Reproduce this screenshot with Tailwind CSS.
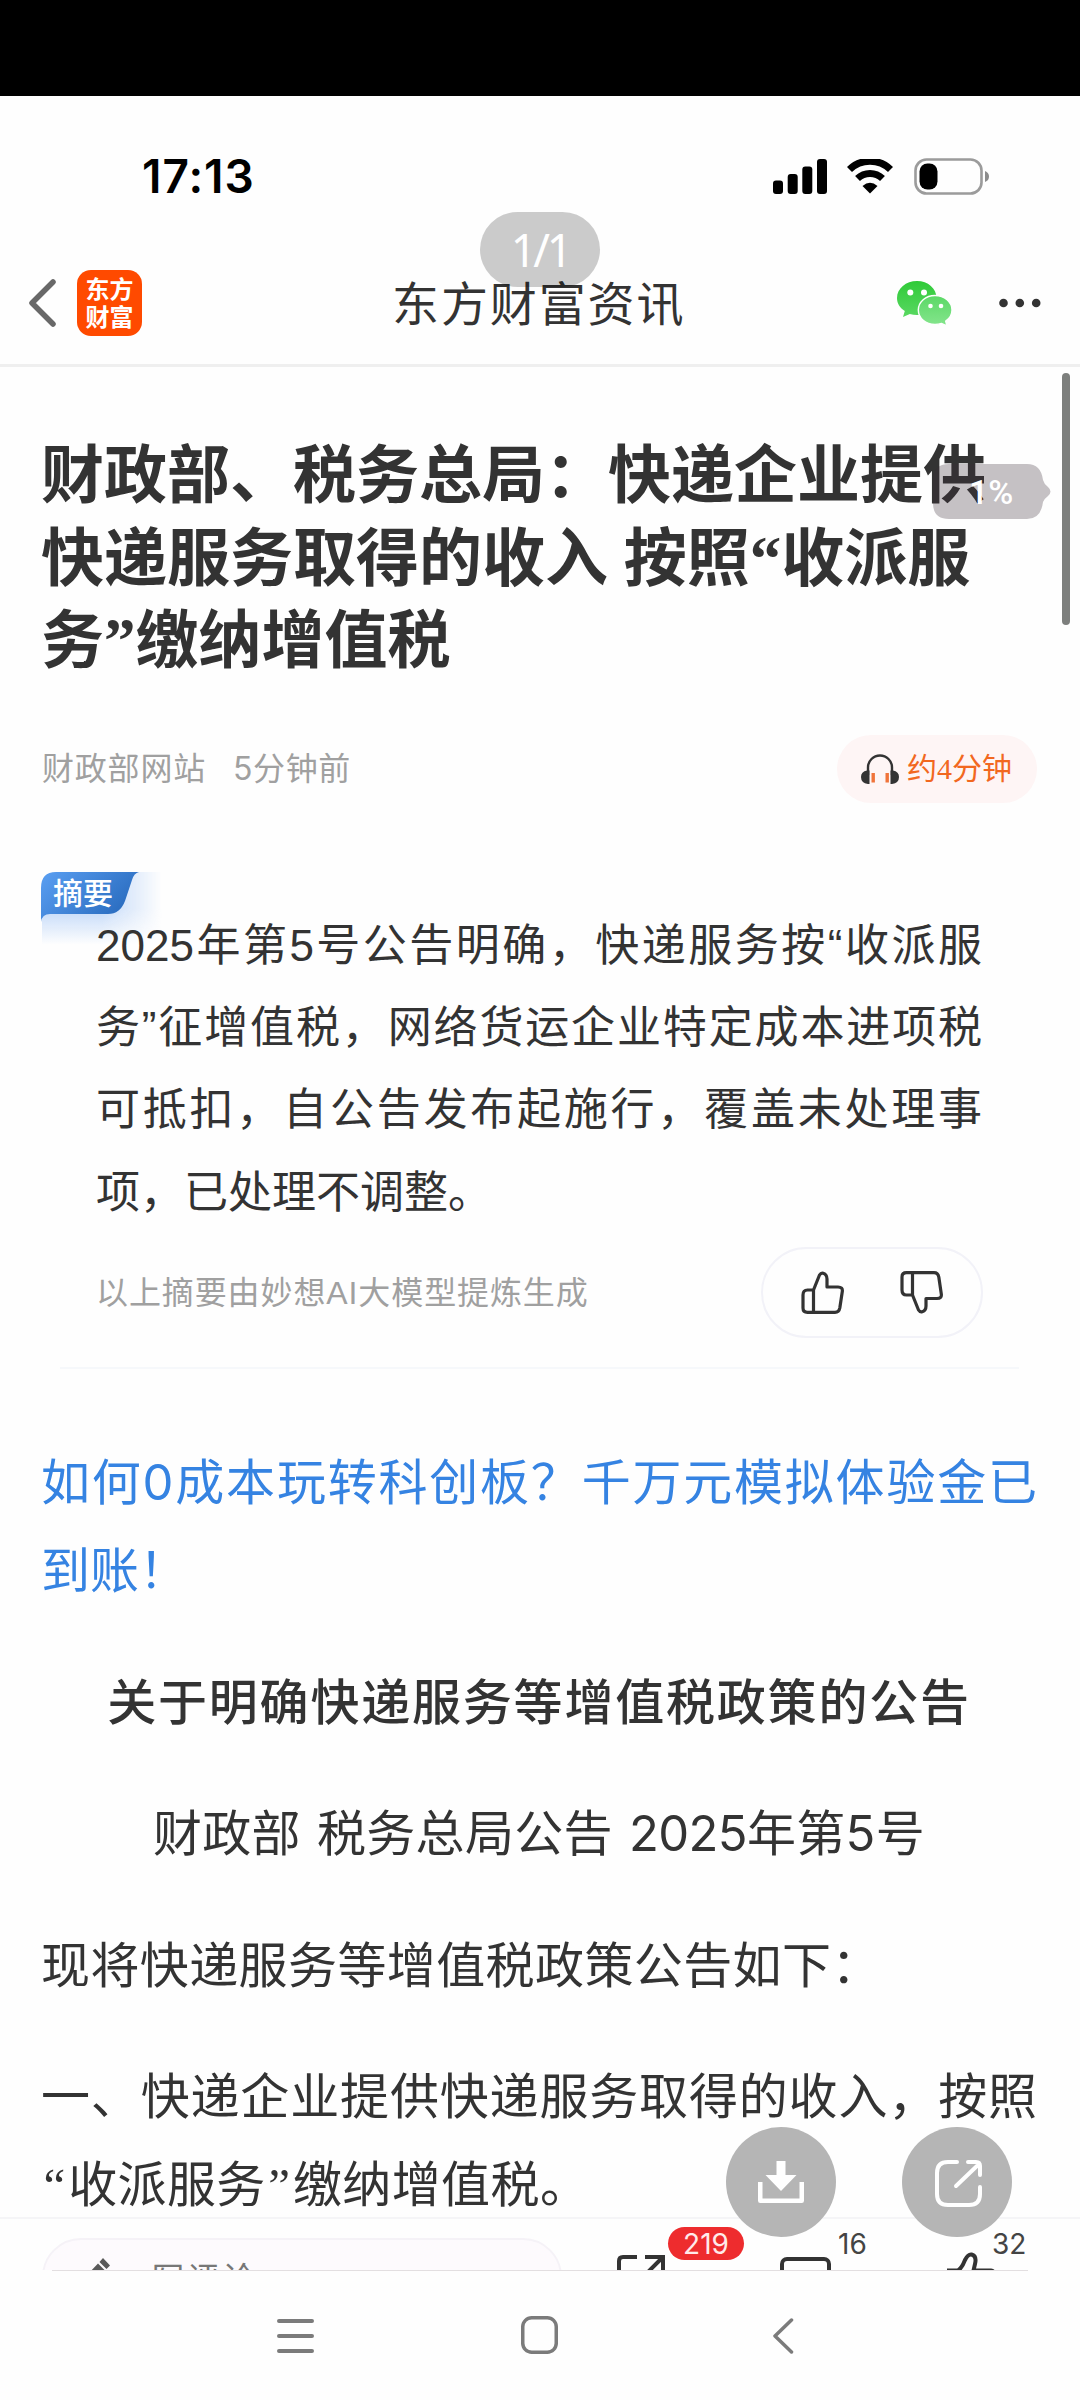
<!DOCTYPE html>
<html lang="zh-CN">

<head>
  <meta charset="UTF-8">
  <meta name="viewport" content="width=device-width, initial-scale=1.0">
  <title>东方财富资讯</title>
  <script src="https://cdn.jsdelivr.net/npm/@tailwindcss/browser@4"></script>
</head>

<body class="bg-[#fefefe]">
  <div class="relative flex flex-col w-[1080px] h-[2400px] overflow-hidden bg-[#fefefe] text-[#333] font-['Inter','Noto_Sans_CJK_SC',sans-serif]">

    <div class="h-24 shrink-0 bg-black"></div>

    <!-- Status bar -->
    <div class="flex items-center justify-between h-[160px] shrink-0 pl-[142px] pr-[90px]">
      <span class="text-[46px] font-semibold text-black tracking-[1px]">17:13</span>
      <div class="flex items-center">
        <svg class="w-[54px] h-[35px]" viewBox="0 0 54 35" fill="#000">
          <rect x="0" y="21.5" width="10" height="13.5" rx="3" />
          <rect x="14.7" y="15" width="10" height="20" rx="3" />
          <rect x="29.3" y="7.5" width="10" height="27.5" rx="3" />
          <rect x="44" y="0" width="10" height="35" rx="3" />
        </svg>
        <svg class="w-[46px] h-[35px] ml-[20px]" viewBox="0 0 46 35">
          <path d="M2.5 10.5 A29.5 29.5 0 0 1 43.5 10.5" fill="none" stroke="#000" stroke-width="7.2" />
          <path d="M10.5 19.5 A18 18 0 0 1 35.5 19.5" fill="none" stroke="#000" stroke-width="7" />
          <path d="M23 34.5 L15.5 27 Q23 20.5 30.5 27 Z" fill="#000" />
        </svg>
        <svg class="w-[76px] h-[37px] ml-[21px]" viewBox="0 0 76 37">
          <rect x="1.5" y="1.5" width="66" height="34" rx="11" fill="none" stroke="#9b9b9b" stroke-width="2.6" />
          <rect x="5.5" y="5.5" width="18" height="26" rx="8" fill="#000" />
          <path d="M71 13 Q75 14.500 75 18.500 Q75 22.500 71 24 Z" fill="#8c8c8c" />
        </svg>
      </div>
    </div>

    <!-- Title bar -->
    <header class="relative flex items-center justify-between h-[111px] shrink-0 pl-[29px] pr-[39px] pt-[2px] pb-[16px] border-b-[3px] border-[#efefef]">
      <div class="flex items-center gap-[21px]">
        <svg class="w-[27px] h-[48px]" viewBox="0 0 27 48" fill="none" stroke="#686868" stroke-width="5.500" stroke-linecap="round" stroke-linejoin="round">
          <path d="M24 3 L3 24 L24 45" />
        </svg>
        <div class="w-[65px] h-[66px] rounded-[14px] bg-[#ff4a00] text-white text-[24px] leading-[28px] font-bold text-center pt-[4px] font-['Noto_Sans_CJK_SC',sans-serif]">东方<br>财富</div>
      </div>
      <h1 class="absolute left-[392px] top-[12px] text-[47px] leading-[72px] tracking-[1.900px] whitespace-nowrap">东方财富资讯</h1>
      <div class="flex items-center gap-[47px]">
        <svg class="w-[55px] h-[45px]" viewBox="0 0 55 45">
          <defs>
            <linearGradient id="wxBack" x1="0" y1="0" x2="0" y2="1">
              <stop offset="0" stop-color="#2fca38" />
              <stop offset="1" stop-color="#5ad862" />
            </linearGradient>
            <linearGradient id="wxFront" x1="0" y1="0" x2="0" y2="1">
              <stop offset="0" stop-color="#5bd866" />
              <stop offset="1" stop-color="#85e58d" />
            </linearGradient>
          </defs>
          <path d="M20 0 C31 0 39.500 7.500 39.500 17 C39.500 27 31 34 20 34 C17.500 34 15 33.600 12.800 32.900 L6 36 L7.800 30 C3 27 0 22.500 0 17 C0 7.500 9 0 20 0 Z" fill="url(#wxBack)" />
          <path d="M38 14.500 C47.500 14.500 55 21 55 29 C55 33.500 52.500 37.600 48.700 40.200 L50 45 L44.500 42.400 C42.500 43.100 40.300 43.500 38 43.500 C28.700 43.500 21.300 37 21.300 29 C21.300 21 28.700 14.500 38 14.500 Z" fill="url(#wxFront)" stroke="#fefefe" stroke-width="1.400" />
          <circle cx="13.300" cy="11.500" r="3" fill="#fff" />
          <circle cx="27" cy="11.500" r="3" fill="#fff" />
          <circle cx="33.500" cy="25" r="2.300" fill="#fff" />
          <circle cx="44" cy="25" r="2.300" fill="#fff" />
        </svg>
        <svg class="w-[42px] h-[10px]" viewBox="0 0 42 10" fill="#333">
          <circle cx="4.500" cy="5" r="4.300" />
          <circle cx="20.800" cy="5" r="4.300" />
          <circle cx="37.200" cy="5" r="4.300" />
        </svg>
      </div>
    </header>

    <!-- Article -->
    <main class="relative flex-1 min-h-0 overflow-hidden pl-[42px] pr-[43px] pt-[68px]">
      <h2 class="text-[63px] leading-[82.5px] -ml-[1px] font-bold whitespace-nowrap font-['Liberation_Serif','Noto_Sans_CJK_SC',sans-serif]">财政部、税务总局：快递企业提供<br>快递服务取得的收入 按照“收派服<br>务”缴纳增值税</h2>

      <div class="flex items-center justify-between mt-[52px] h-[68px] text-[#a0a0a0] text-[32px] tracking-[0.8px]">
        <div class="flex gap-[27px]">
          <span>财政部网站</span>
          <span class="tracking-[0.6px]">5分钟前</span>
        </div>
        <div class="flex items-center w-[200px] h-[68px] rounded-full bg-[#fef5f5] pl-[24px]">
          <svg class="w-[38px] h-[30px]" viewBox="0 0 38 30">
            <path d="M7 21 V13.500 A12 12 0 0 1 31 13.500 V21" fill="none" stroke="#333" stroke-width="2.400" />
            <path d="M8.500 16.500 V30 H7 Q0 29 0 23 Q0 17.500 6 16.500 Z M29.500 16.500 V30 H31 Q38 29 38 23 Q38 17.500 32 16.500 Z" fill="#333" />
            <rect x="10.500" y="19" width="3.400" height="9.500" fill="#f0743a" />
            <rect x="24.500" y="19" width="3.400" height="9.500" fill="#f0743a" />
          </svg>
          <span class="ml-[8px] -mt-[1px] text-[30px] tracking-[0px] text-[#f2681f] font-['Liberation_Serif','Noto_Sans_CJK_SC',sans-serif]">约4分钟</span>
        </div>
      </div>

      <!-- AI summary -->
      <section class="relative mt-[69px] pt-[33px] pl-[55px] pr-[55px]">
        <div class="absolute left-0 top-0 w-[120px] h-[73px] rounded-tl-[16px] bg-linear-to-b from-[#c3d9f8] from-50% to-[#fefefe]/0 [mask-image:linear-gradient(to_right,black_50%,transparent)]"></div>
        <svg class="absolute left-[-1px] top-0 w-[98px] h-[50px]" viewBox="0 0 98 50">
          <defs>
            <linearGradient id="tag" x1="0" y1="0" x2="1" y2="0.500">
              <stop offset="0" stop-color="#5a9ff2" />
              <stop offset="1" stop-color="#2a6cbf" />
            </linearGradient>
          </defs>
          <path d="M0 50 V16 Q0 0 15 0 H98 Q93 1 91 8 L84 29 Q79 42 67 42 H9 Q1 42 0 50 Z" fill="url(#tag)" />
        </svg>
        <span class="absolute left-[11px] -top-[1px] text-[30px] leading-[45px] font-medium text-white">摘要</span>

        <div class="relative -ml-[1px] text-[44px] leading-[82.4px] whitespace-nowrap font-['Liberation_Sans','Noto_Sans_CJK_SC',sans-serif]">
          <p class="[text-align-last:justify]">2025年第5号公告明确，快递服务按“收派服</p>
          <p class="[text-align-last:justify]">务”征增值税，网络货运企业特定成本进项税</p>
          <p class="[text-align-last:justify]">可抵扣，自公告发布起施行，覆盖未处理事</p>
          <p>项，已处理不调整。</p>
        </div>

        <div class="flex items-center justify-between mt-[13px] h-[91px]">
          <span class="-ml-[1px] text-[32px] tracking-[0.9px] text-[#a0a0a0] font-['Liberation_Sans','Noto_Sans_CJK_SC',sans-serif]">以上摘要由妙想AI大模型提炼生成</span>
          <div class="flex items-center justify-center gap-[56px] w-[222px] h-[91px] rounded-full border-2 border-[#f2f2f8] -mr-[1px]">
            <svg class="w-[43px] h-[43px]" viewBox="0 0 43 43" fill="none" stroke="#333" stroke-width="3.200" stroke-linejoin="round">
              <path d="M12.500 19 L18.500 4 Q20 1.600 22.200 2.200 Q26 3.500 26 8 V16 H37 Q42 16 41.300 20.500 L38.800 37 Q38 41.300 34 41.300 H6.500 Q2 41.300 2 37 V24 Q2 19 6.500 19 Z M12.500 19 V41" />
            </svg>
            <svg class="w-[43px] h-[43px]" viewBox="0 0 43 43" fill="none" stroke="#333" stroke-width="3.200" stroke-linejoin="round">
              <path d="M12.500 24 L18.500 39 Q20 41.400 22.200 40.800 Q26 39.500 26 35 V27.500 H37 Q42 27.500 41.300 23 L38.800 6 Q38 1.700 34 1.700 H6.500 Q2 1.700 2 6 V19 Q2 24 6.500 24 Z M12.500 24 V2" />
            </svg>
          </div>
        </div>
      </section>
      <div class="mt-[29px] mx-[18px] h-[2px] bg-[#f6f8fb]"></div>

      <!-- Body text -->
      <div class="mt-[70px] -ml-[1px] flex flex-col gap-[43.500px] text-[49px] leading-[88px] whitespace-nowrap">
        <div class="text-[#3583e2]">
          <p class="[text-align-last:justify]">如何0成本玩转科创板？千万元模拟体验金已</p>
          <p>到账！</p>
        </div>
        <p class="text-center font-medium tracking-[1.8px]">关于明确快递服务等增值税政策的公告</p>
        <p class="text-center tracking-[0.3px] [word-spacing:2px]">财政部 税务总局公告 <span class="tracking-[-0.6px]">2025</span>年第5号</p>
        <p class="tracking-[0.4px]">现将快递服务等增值税政策公告如下：</p>
        <div>
          <p class="[text-align-last:justify]">一、快递企业提供快递服务取得的收入，按照</p>
          <p class="tracking-[0.4px]"><span class="px-[2.500px] font-['Liberation_Serif']">“</span>收派服务<span class="px-[2.500px] font-['Liberation_Serif']">”</span>缴纳增值税。</p>
        </div>
      </div>

      <!-- Scrollbar -->
      <div class="absolute left-[1062px] top-[6px] w-[8px] h-[252px] rounded-full bg-[#7d7f7d]"></div>
      <!-- Reading progress -->
      <div class="absolute left-[933px] top-[97px] w-[118px] h-[55px]">
        <svg class="absolute inset-0" width="118" height="55" viewBox="0 0 118 55">
          <path d="M16 0 H94 Q108 0 110 16 Q111 20 115 23 Q120 27.500 115 32 Q111 35 110 38 Q108 55 94 55 H16 Q0 55 0 39 V16 Q0 0 16 0 Z" fill="#3a2c38" fill-opacity="0.29" />
        </svg>
        <span class="absolute left-[36px] top-0 text-[34px] leading-[56px] font-medium text-white font-['Roboto']">1%</span>
      </div>
    </main>

    <!-- Comment bar -->
    <div class="flex h-[53px] shrink-0 overflow-hidden border-t-2 border-[#f5f5f7] pl-[42px] pr-[56px] bg-[#fefefe]">
      <div class="flex w-[520px] h-[78px] mt-[19px] shrink-0 rounded-full border-2 border-[#f5f2f7] bg-[#fdfafd] pl-[46px]">
        <svg class="w-[26px] h-[30px] mt-[18px]" viewBox="0 0 26 30" fill="#5a5a5a">
          <path d="M13 0 L20 7.500 L16.500 11 L9.500 4 Z M8 5.500 L15 12.500 L3 25 L-3 26 L-3 17 Z" />
        </svg>
        <span class="ml-[36px] mt-[16px] text-[32px] leading-[46px] tracking-[3.5px] text-[#777]">写评论</span>
      </div>
      <div class="relative w-[127px] ml-[55px] shrink-0">
        <svg class="absolute left-0 top-[36px]" width="48" height="48" viewBox="0 0 48 48" fill="none" stroke="#333" stroke-width="4">
          <path d="M20 2 H6 Q2 2 2 6 V42 Q2 46 6 46 H42 Q46 46 46 42 V28 M28 2 H46 V20 M46 2 L22 26" />
        </svg>
        <span class="absolute left-[51px] top-[8px] w-[76px] h-[33px] rounded-full bg-[#ee2c2e] text-[#ffeaea] text-[28px] leading-[34px] text-center">219</span>
      </div>
      <div class="relative w-[130px] ml-[36px] shrink-0">
        <svg class="absolute left-0 top-[38px]" width="51" height="48" viewBox="0 0 51 48" fill="none" stroke="#333" stroke-width="4">
          <rect x="2" y="2" width="47" height="38" rx="5" />
        </svg>
        <span class="absolute left-[58px] top-[8px] text-[28px] leading-[34px] text-[#444]">16</span>
      </div>
      <div class="relative w-[80px] ml-[37px] shrink-0">
        <svg class="absolute left-0 top-[33px]" width="48" height="48" viewBox="0 0 48 48" fill="none" stroke="#333" stroke-width="4">
          <path d="M0 18.500 H11 Q15 16 18 8 Q21 2 24.500 2.500 Q30 4 28 12 L26.500 18.500 H44 Q48 19 47 24" />
        </svg>
        <span class="absolute left-[45px] top-[8px] text-[28px] leading-[34px] text-[#444]">32</span>
      </div>
    </div>

    <!-- System navigation -->
    <nav class="relative flex items-center h-[130px] shrink-0 bg-[#fefefe] pl-[277px] text-[#7b7b7b]">
      <div class="absolute left-[52px] right-[52px] top-0 h-px bg-[#e3dfe1]"></div>
      <svg class="w-[37px] h-[34px] mt-[2px]" viewBox="0 0 37 34" stroke="currentColor" stroke-width="4" stroke-linecap="round">
        <path d="M2 2 H35 M2 17 H35 M2 32 H35" />
      </svg>
      <svg class="w-[37px] h-[38px] ml-[207px]" viewBox="0 0 37 38" fill="none" stroke="currentColor" stroke-width="3.500">
        <rect x="1.750" y="1.750" width="33.500" height="34.500" rx="9" />
      </svg>
      <svg class="w-[21px] h-[36px] ml-[215px] mt-[1px]" viewBox="0 0 21 36" fill="none" stroke="currentColor" stroke-width="3.500" stroke-linecap="round" stroke-linejoin="round">
        <path d="M18.500 2 L2 18 L18.500 34" />
      </svg>
    </nav>

    <!-- Page counter -->
    <div class="absolute left-[480px] top-[212px] w-[120px] h-[75px] rounded-full bg-black/20 text-white text-[45px] leading-[76px] tracking-[-3.200px] text-center font-['Noto_Sans']">1/1</div>

    <!-- Floating buttons -->
    <div class="absolute left-[726px] top-[2127px] flex gap-[66px]">
      <div class="flex items-center justify-center w-[110px] h-[110px] rounded-full bg-[#b5b5b5]">
        <svg class="w-[46px] h-[42px]" viewBox="0 0 46 42">
          <path d="M18.500 0 H27.500 V14 H38.500 L23 30 L7.500 14 H18.500 Z" fill="#fff" />
          <path d="M2.250 21 V39.700 H43.750 V21" fill="none" stroke="#fff" stroke-width="4.500" stroke-linejoin="round" />
        </svg>
      </div>
      <div class="flex items-center justify-center w-[110px] h-[110px] rounded-full bg-[#b5b5b5]">
        <svg class="w-[47px] h-[47px] mt-[2px] mr-[-2px]" viewBox="0 0 47 47" fill="none" stroke="#fff" stroke-width="4" stroke-linecap="round" stroke-linejoin="round">
          <path d="M22 2 H13 Q2 2 2 13 V34 Q2 45 13 45 H34 Q45 45 45 34 V27 M33 2 H41 Q45 2 45 6 V15 M43 5 L21 26" />
        </svg>
      </div>
    </div>
  </div>
</body>

</html>
